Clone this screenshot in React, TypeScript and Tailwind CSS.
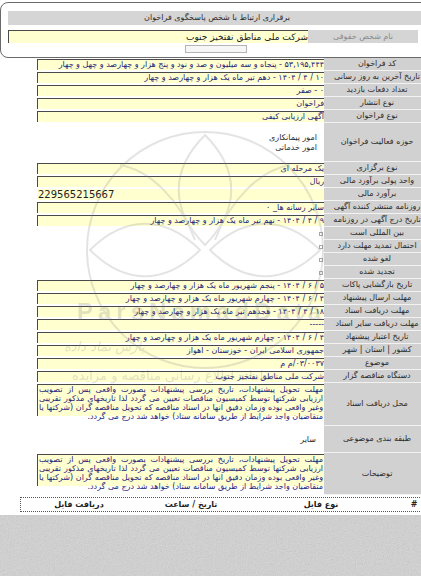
import React from "react";

// rows of the tender detail table (label on the right, value on the left)
type Row =
  | { kind: "box"; label: string; value: string }
  | { kind: "ltr"; label: string; value: string }
  | { kind: "check"; label: string };

const topRows: Row[] = [
  {
    kind: "box",
    label: "کد فراخوان",
    value: "۵۳,۱۹۵,۴۴۴ - پنجاه و سه میلیون و صد و نود و پنج هزار و چهارصد و چهل و چهار",
  },
  {
    kind: "box",
    label: "تاریخ آخرین به روز رسانی",
    value: "۱۰ / ۴ / ۱۴۰۴ - دهم تیر ماه یک هزار و چهارصد و چهار",
  },
  { kind: "box", label: "تعداد دفعات بازدید", value: "۰ - صفر" },
  { kind: "box", label: "نوع انتشار", value: "فراخوان" },
  { kind: "box", label: "نوع فراخوان", value: "آگهی ارزیابی کیفی" },
];

const midRows: Row[] = [
  { kind: "box", label: "نوع برگزاری", value: "یک مرحله ای" },
  { kind: "box", label: "واحد پولی برآورد مالی", value: "ریال" },
  { kind: "ltr", label: "برآورد مالی", value: "229565215667" },
  { kind: "box", label: "روزنامه منتشر کننده آگهی", value: "سایر رسانه ها_ ۰" },
  {
    kind: "box",
    label: "تاریخ درج آگهی در روزنامه",
    value: "۹ / ۴ / ۱۴۰۴ - نهم تیر ماه یک هزار و چهارصد و چهار",
  },
  { kind: "check", label: "بین المللی است" },
  { kind: "check", label: "احتمال تمدید مهلت دارد" },
  { kind: "check", label: "لغو شده" },
  { kind: "check", label: "تجدید شده" },
  {
    kind: "box",
    label: "تاریخ بازگشایی پاکات",
    value: "۵ / ۶ / ۱۴۰۴ - پنجم شهریور ماه یک هزار و چهارصد و چهار",
  },
  {
    kind: "box",
    label: "مهلت ارسال پیشنهاد",
    value: "۴ / ۶ / ۱۴۰۴ - چهارم شهریور ماه یک هزار و چهارصد و چهار",
  },
  {
    kind: "box",
    label: "مهلت دریافت اسناد",
    value: "۱۸ / ۴ / ۱۴۰۴ - هجدهم تیر ماه یک هزار و چهارصد و چهار",
  },
  { kind: "box", label: "مهلت دریافت سایر اسناد", value: "-----" },
  {
    kind: "box",
    label: "تاریخ اعتبار پیشنهاد",
    value: "۴ / ۶ / ۱۴۰۴ - چهارم شهریور ماه یک هزار و چهارصد و چهار",
  },
  { kind: "box", label: "کشور | استان | شهر", value: "جمهوری اسلامی ایران - خوزستان - اهواز" },
  { kind: "box", label: "موضوع", value: "۰۳/۰۰۳۷/م م" },
  { kind: "box", label: "دستگاه مناقصه گزار", value: "شرکت ملی مناطق نفتخیز جنوب" },
];

const longText = [
  "مهلت تحویل پیشنهادات، تاریخ بررسی پیشنهادات بصورت واقعی پس از تصویب",
  "ارزیابی شرکتها توسط کمیسیون مناقصات تعیین می گردد لذا تاریخهای مذکور تقریبی",
  "وغیر واقعی بوده وزمان دقیق انها در اسناد مناقصه که تحویل مناقصه گران (شرکتها یا",
  "متقاضیان واجد شرایط از طریق سامانه ستاد) خواهد شد درج می گردد.",
];

function Label({ children }: { children: React.ReactNode }) {
  return (
    <div
      dir="rtl"
      className="w-[106px] shrink-0 bg-[#d1d1d1] border-b border-[#f2f2f2] flex items-center justify-center text-[8px] text-[#2b2b2b] whitespace-nowrap"
    >
      {children}
    </div>
  );
}

function TableRow({ row }: { row: Row }) {
  return (
    <div className="flex h-[13px]">
      <div className="w-[37px] shrink-0" />
      <div className="w-[287px] shrink-0 flex items-center justify-end">
        {row.kind === "box" && (
          <div
            dir="rtl"
            className="h-[11px] w-full bg-[#ffffd0] border-t border-l border-[#4a4a4a] text-[8px] leading-[10px] text-[#24247a] whitespace-nowrap overflow-hidden"
          >
            {row.value}
          </div>
        )}
        {row.kind === "ltr" && (
          <div
            dir="ltr"
            className="h-[11px] w-full bg-[#ffffd0] text-[10px] leading-[11px] text-[#1e1e1e] pl-[1px] whitespace-nowrap overflow-hidden"
          >
            {row.value}
          </div>
        )}
        {row.kind === "check" && (
          <div className="w-[4px] h-[4px] border border-[#a8a8a8] bg-white mr-[1px]" />
        )}
      </div>
      <Label>{row.label}</Label>
    </div>
  );
}

function LongRow({ label, h }: { label: string; h: "h-[43px]" | "h-[42px]" }) {
  return (
    <div className={`flex ${h}`}>
      <div className="w-[37px] shrink-0" />
      <div className="w-[287px] shrink-0 pt-[1px]">
        <div className="h-[32px] w-full bg-[#ffffd0] border-t border-l border-[#4a4a4a]">
          <div dir="rtl" className="text-[8px] leading-[9px] text-[#24247a] pr-[1px] pl-[1px]">
            {longText.map((line, i) => (
              <div
                key={i}
                className={
                  i < longText.length - 1
                    ? "text-justify [text-align-last:justify] whitespace-nowrap"
                    : "text-right whitespace-nowrap"
                }
              >
                {line}
              </div>
            ))}
          </div>
        </div>
      </div>
      <Label>{label}</Label>
    </div>
  );
}

// faint site watermark lying over the table
function Watermark() {
  return (
    <div className="absolute inset-0 pointer-events-none opacity-[0.2]">
      <svg className="absolute left-0 top-0" width="421" height="576" viewBox="0 0 421 576">
        <g fill="none" stroke="#7a7a7a" strokeWidth="2">
          <circle cx="205" cy="250" r="118" />
          <path d="M205 135 C170 170 170 210 205 245 C240 210 240 170 205 135 Z" />
          <path d="M90 250 C125 215 165 215 200 250 C165 285 125 285 90 250 Z" />
          <path d="M320 250 C285 215 245 215 210 250 C245 285 285 285 320 250 Z" />
          <path d="M120 165 C150 170 180 200 195 240" />
          <path d="M290 165 C260 170 230 200 215 240" />
        </g>
      </svg>
      <div className="absolute left-[77px] top-[300px] leading-none text-[24px] font-bold tracking-[5px] text-[#6e6e6e] font-['Liberation_Sans',sans-serif]">
        ParsNamadData
      </div>
      <div
        dir="rtl"
        className="absolute left-[64px] top-[337px] text-[13px] italic text-[#6e6e6e] font-['DejaVu_Sans',sans-serif]"
      >
        پارس نماد داده
      </div>
      <div
        dir="rtl"
        className="absolute left-[72px] top-[366px] text-[13px] text-[#6e6e6e] font-['DejaVu_Sans',sans-serif]"
      >
        سامانه اطلاع رسانی مناقصه و مزایده
      </div>
    </div>
  );
}

export default function App() {
  return (
    <div className="relative w-[421px] h-[576px] overflow-hidden bg-white font-['DejaVu_Sans',sans-serif]">
      {/* contact panel */}
      <div className="pt-[2px]">
        <div className="w-[440px] h-[56px] border border-[#6a6a6a] rounded-[8px] pl-[7px] pt-[8px]">
          <div
            dir="rtl"
            className="h-[14px] w-[418px] bg-[#d5d5d5] text-center text-[8px] leading-[14px] text-[#2b2b2b]"
          >
            برقراری ارتباط با شخص پاسخگوی فراخوان
          </div>
          <div className="mt-[5px] flex h-[13px]">
            <div
              dir="rtl"
              className="w-[300px] bg-[#ffffd0] border-t border-l border-[#4a4a4a] text-[9px] leading-[12px] text-[#222]"
            >
              شرکت ملی مناطق نفتخیز جنوب
            </div>
            <div
              dir="rtl"
              className="w-[110px] bg-[#d5d5d5] flex items-center justify-center text-[8px] text-[#8a8a8a]"
            >
              نام شخص حقوقی
            </div>
          </div>
          <div className="mt-[2px] ml-[177px] w-[62px] h-[8px] border border-[#b4b4b4] bg-[#f6f6f6]" />
        </div>
      </div>

      {/* detail table */}
      <div className="w-[430px]">
        {topRows.map((r) => (
          <TableRow key={r.label} row={r} />
        ))}
        <div className="flex h-[39px]">
          <div className="w-[37px] shrink-0" />
          <div
            dir="rtl"
            className="w-[287px] shrink-0 flex flex-col justify-center pr-[7px] text-[8px] leading-[10px] text-[#2b2b2b]"
          >
            <div>امور پیمانکاری</div>
            <div>امور خدماتی</div>
          </div>
          <Label>حوزه فعالیت فراخوان</Label>
        </div>
        {midRows.map((r) => (
          <TableRow key={r.label} row={r} />
        ))}
        <LongRow label="محل دریافت اسناد" h="h-[43px]" />
        <div className="flex h-[27px]">
          <div className="w-[37px] shrink-0" />
          <div
            dir="rtl"
            className="w-[287px] shrink-0 flex items-center pr-[8px] text-[8px] text-[#2b2b2b]"
          >
            سایر
          </div>
          <Label>طبقه بندی موضوعی</Label>
        </div>
        <LongRow label="توضیحات" h="h-[42px]" />
      </div>

      {/* files header */}
      <div className="mt-[2px] ml-[20px] w-[410px] h-[15px] border-t border-b border-l border-dotted border-[#555] grid grid-cols-[116px_108px_152px_34px] items-center text-[8px] font-bold text-[#222]">
        <div className="text-center">دریافت فایل</div>
        <div className="text-center" dir="rtl">
          تاریخ / ساعت
        </div>
        <div className="text-center">نوع فایل</div>
        <div className="text-center">#</div>
      </div>

      {/* textured page background below the content */}
      <div className="mt-[3px] h-[70px] w-full bg-[#d3d3d3]">
        <svg width="421" height="70" className="block">
          <filter id="paper">
            <feTurbulence type="fractalNoise" baseFrequency="0.85" numOctaves="2" seed="3" />
            <feColorMatrix type="saturate" values="0" />
            <feComponentTransfer>
              <feFuncA type="linear" slope="0.35" />
            </feComponentTransfer>
          </filter>
          <rect width="421" height="70" fill="#d3d3d3" />
          <rect width="421" height="70" filter="url(#paper)" />
        </svg>
      </div>

      <Watermark />
    </div>
  );
}
